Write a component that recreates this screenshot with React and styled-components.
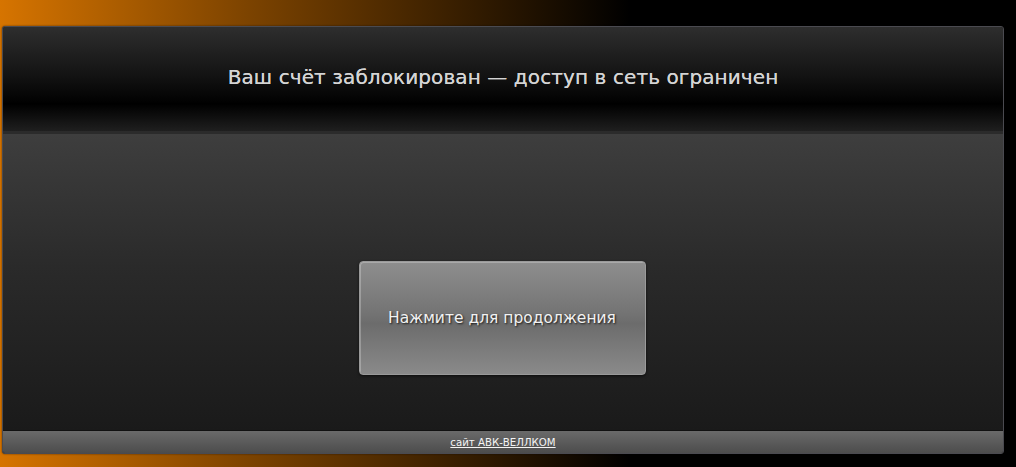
import styled, { createGlobalStyle } from 'styled-components';

const Global = createGlobalStyle`
    html, body {
        margin: 0;
        padding: 0;
        height: 100%;
    }

    body {
        background: linear-gradient(to right, #d67400 0%, #7a4200 25%, #000 62%);
        font-family: "DejaVu Sans", Verdana, sans-serif;
        overflow: hidden;
    }
`;

const Page = styled.div`
    width: 1016px;
    height: 467px;
    padding: 26px 0 0 2px;
    box-sizing: border-box;
`;

const Frame = styled.div`
    width: 1002px;
    height: 428px;
    box-sizing: border-box;
    border: 1px solid #4a4a50;
    border-radius: 3px;
    background: #1c1c1c;
    display: flex;
    flex-direction: column;
    overflow: hidden;
    box-shadow: 0 0 2px rgba(0, 0, 0, 0.6);
`;

const Header = styled.div`
    height: 104px;
    flex: none;
    display: flex;
    align-items: center;
    justify-content: center;
    background: linear-gradient(to bottom, #2e2e2e 0%, #141414 45%, #000 74%, #1f1f1f 100%);
    border-bottom: 3px solid #2b2b2b;
`;

const Title = styled.h1`
    margin: 0 0 4px;
    font-size: 20px;
    font-weight: normal;
    color: #d4d4d4;
    letter-spacing: 0.1px;
    text-shadow: 0 0 0.5px #d4d4d4;
`;

const Body = styled.div`
    flex: 1;
    display: flex;
    justify-content: center;
    align-items: flex-start;
    padding-top: 127px;
    box-sizing: border-box;
    background: linear-gradient(to bottom, #3e3e3e 0%, #2a2a2a 45%, #1a1a1a 100%);
`;

const Button = styled.button`
    width: 287px;
    height: 114px;
    margin-left: -2px;
    border: 1px solid #9a9a9a;
    border-radius: 4px;
    background: linear-gradient(to bottom, #8e8e8e 0%, #747474 45%, #6c6c6c 55%, #8a8a8a 100%);
    box-shadow: 0 1px 3px rgba(0, 0, 0, 0.6), inset 1px 1px 0 rgba(255, 255, 255, 0.25);
    color: #f2f2f2;
    font-family: "DejaVu Sans", Verdana, sans-serif;
    font-size: 15.5px;
    text-shadow: 1px 1px 2px rgba(0, 0, 0, 0.8);
    cursor: pointer;
    padding: 0;
`;

const Footer = styled.div`
    height: 22px;
    flex: none;
    display: flex;
    align-items: center;
    justify-content: center;
    background: linear-gradient(to bottom, #6a6a6a 0%, #4c4c4c 100%);
    border-top: 1px solid #111;
`;

const FooterLink = styled.a`
    color: #f4f4f4;
    font-size: 10.2px;
    text-decoration: underline;
`;

const App = () => {
    return (
        <Page>
            <Global />
            <Frame>
                <Header>
                    <Title>Ваш счёт заблокирован — доступ в сеть ограничен</Title>
                </Header>
                <Body>
                    <Button type="button">Нажмите для продолжения</Button>
                </Body>
                <Footer>
                    <FooterLink href="#">сайт АВК-ВЕЛЛКОМ</FooterLink>
                </Footer>
            </Frame>
        </Page>
    );
};

export default App;
